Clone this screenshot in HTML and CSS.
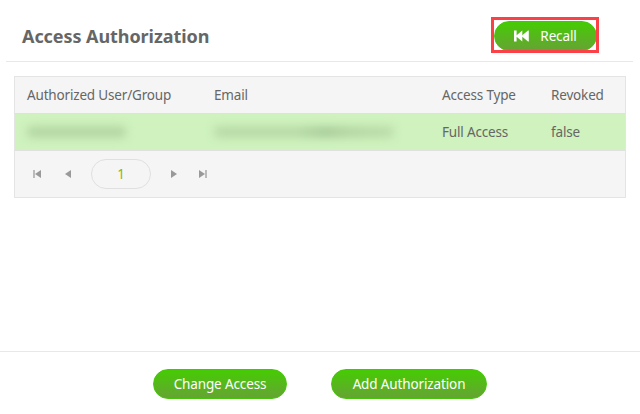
FILE: index.html
```
<!DOCTYPE html>
<html lang="en">
<head>
<meta charset="utf-8">
<title>Access Authorization</title>
<link rel="stylesheet" href="styles.css">
</head>
<body>
<main class="page">
  <header class="header">
    <h1 class="title">Access Authorization</h1>
    <div class="highlight">
      <button class="btn btn-recall">
        <svg width="15" height="12" viewBox="0 0 15 12"><path fill="#fff" d="M0 .5h2.600v4.700L8.300 .5v4.700L14 .5h.800v11H14L8.300 6.800v4.700L2.600 6.800v4.700H0z"/></svg>
        <span>Recall</span>
      </button>
    </div>
  </header>
  <section class="grid">
    <div class="row head">
      <div>Authorized User/Group</div><div>Email</div><div>Access Type</div><div>Revoked</div>
    </div>
    <div class="row data">
      <div><i class="smudge name"></i></div><div><i class="smudge mail"></i></div><div>Full Access</div><div>false</div>
    </div>
    <nav class="pager">
      <svg width="8" height="8" viewBox="0 0 8 8"><path fill="#bbb" d="M0 0h2v8H0z"/><path fill="#999" d="M8 0v8L2 4z"/></svg>
      <svg width="6" height="8" viewBox="0 0 6 8"><path fill="#999" d="M6 0v8L0 4z"/></svg>
      <span class="page-no">1</span>
      <svg width="6" height="8" viewBox="0 0 6 8"><path fill="#999" d="M0 0v8l6-4z"/></svg>
      <svg width="8" height="8" viewBox="0 0 8 8"><path fill="#bbb" d="M6 0h2v8H6z"/><path fill="#999" d="M0 0v8l6-4z"/></svg>
    </nav>
  </section>
  <footer class="footer">
    <button class="btn btn-change">Change Access</button>
    <button class="btn btn-add">Add Authorization</button>
  </footer>
</main>
</body>
</html>
```
FILE: styles.css
```
* { box-sizing: border-box; }
body { margin: 0; background: #fff; color: #666; font: 13.5px/20px "Noto Sans", "Open Sans", sans-serif; letter-spacing: -.17px; }
.page { height: 414px; display: flex; flex-direction: column; overflow: hidden; }
.header { height: 62px; margin: 0 7px 0 6px; border-bottom: 1px solid #e8e8e8; display: flex; justify-content: space-between; align-items: flex-start; padding: 17px 34px 0 16px; }
.title { margin: 6px 0 0; font-size: 18px; line-height: 26px; font-weight: 700; letter-spacing: -.07px; white-space: nowrap; }
.highlight { width: 108px; height: 36px; border: 3px solid #fb4148; overflow: hidden; padding-top: 1px; }
.btn { border: 1px solid #45c60b; border-radius: 15px; height: 30px; padding: 0; background: linear-gradient(#45cc03, #66a334); color: #fff; font: inherit; letter-spacing: -.13px; display: flex; align-items: center; justify-content: center; white-space: nowrap; }
.btn-recall { width: 103px; gap: 11px; }
.grid { width: 612px; height: 122px; margin: 14px 0 0 14px; border: 1px solid #e4e4e4; background: #f5f5f5; }
.row { height: 37px; display: grid; grid-template-columns: 187px 228px 109px 74px; padding-left: 12px; align-items: center; border-bottom: 1px solid #e0e0e0; white-space: nowrap; }
.data { background: #cff2be; }
.smudge { display: block; height: 12px; border-radius: 5px; filter: blur(4.5px); background: #b4d7a3; }
.name { width: 99px; }
.mail { width: 180px; background: linear-gradient(90deg, #b8dba8, #b8dba8 45%, #a9cd9b 62%, #b4d7a3 75%, #bbdeab); }
.pager { height: 46px; display: flex; align-items: center; padding-left: 18px; }
.pager svg:nth-child(2) { margin-left: 24px; }
.page-no { width: 60px; height: 30px; margin: 0 20px; border: 1px solid #e0e0e0; border-radius: 15px; text-align: center; line-height: 28px; color: #97b500; }
.pager svg:last-child { margin-left: 22px; }
.footer { height: 63px; margin-top: auto; border-top: 1px solid #e8e8e8; display: flex; align-items: flex-start; padding: 17px 0 0 153px; gap: 44px; }
.btn-change { width: 134px; }
.btn-add { width: 156px; }
```
